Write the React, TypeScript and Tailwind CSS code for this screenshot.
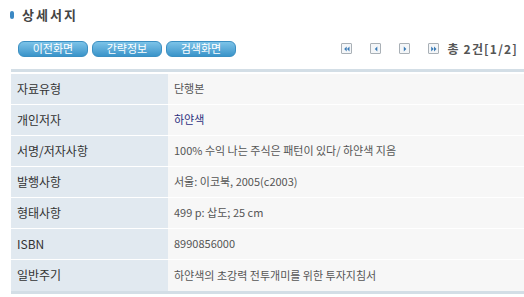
import { ReactNode } from "react";

const rows: { label: string; value: ReactNode }[] = [
  { label: "자료유형", value: "단행본" },
  { label: "개인저자", value: <span className="text-[#2b2f7e]">하얀색</span> },
  { label: "서명/저자사항", value: "100% 수익 나는 주식은 패턴이 있다/ 하얀색 지음" },
  { label: "발행사항", value: "서울: 이코북, 2005(c2003)" },
  { label: "형태사항", value: "499 p: 삽도; 25 cm" },
  { label: "ISBN", value: "8990856000" },
  { label: "일반주기", value: "하얀색의 초강력 전투개미를 위한 투자지침서" },
];

function NavIcon({ dir, double }: { dir: "l" | "r"; double?: boolean }) {
  const tri = (x: number) =>
    dir === "l" ? `M${x + 2.5} 1.5 L${x} 4 L${x + 2.5} 6.5 Z` : `M${x} 1.5 L${x + 2.5} 4 L${x} 6.5 Z`;
  return (
    <span className="flex size-[11px] items-center justify-center rounded-[1px] border border-[#a9b0b6] bg-[#f4f6f8]">
      <svg width="8" height="8" viewBox="0 0 8 8">
        {double ? (
          <>
            <path d={tri(1.2)} fill="#3a7bb6" />
            <path d={tri(4)} fill="#3a7bb6" />
          </>
        ) : (
          <path d={tri(2.8)} fill="#3a7bb6" />
        )}
      </svg>
    </span>
  );
}

function Btn({ children }: { children: ReactNode }) {
  return (
    <span className="flex h-[16px] w-[70px] items-center justify-center rounded-[6px] border border-[#3b8fc2] bg-gradient-to-b from-[#7cc3e8] to-[#3994c9] text-[11px] leading-none text-white">
      {children}
    </span>
  );
}

export default function App() {
  return (
    <div
      className="h-[297px] w-[524px] overflow-hidden bg-white"
      style={{ fontFamily: '"Noto Sans CJK KR", "Noto Sans", sans-serif' }}
    >
      <div className="flex items-center gap-[8px] pl-[10px] pt-[5px]">
        <span className="h-[8px] w-[4px] rounded-full bg-[#3b88c3]" />
        <span className="text-[13px] font-bold tracking-[2px] text-[#444]">상세서지</span>
      </div>

      <div className="mt-[15px] flex items-center pl-[18px] pr-[6px]">
        <div className="flex gap-[4px]">
          <Btn>이전화면</Btn>
          <Btn>간략정보</Btn>
          <Btn>검색화면</Btn>
        </div>
        <div className="ml-auto flex items-center">
          <div className="flex gap-[18px]">
            <NavIcon dir="l" double />
            <NavIcon dir="l" />
            <NavIcon dir="r" />
            <NavIcon dir="r" double />
          </div>
          <span className="ml-[8px] text-[12px] font-bold tracking-[1.2px] text-[#555]">총 2건[1/2]</span>
        </div>
      </div>

      <div className="ml-[11px] mt-[11px] border-t-[3px] border-b-[3px] border-[#d3dee6] pt-[2px]">
        {rows.map((r, i) => (
          <div
            key={r.label}
            className={`flex h-[31px] ${i < rows.length - 1 ? "border-b border-white" : ""}`}
          >
            <div className="flex w-[157px] items-center bg-[#e1e9f0] pl-[6px] text-[12px] text-[#333]">
              {r.label}
            </div>
            <div className="flex flex-1 items-center bg-[#f7f7f7] pl-[6px] text-[11px] text-[#555]">
              {r.value}
            </div>
          </div>
        ))}
      </div>
    </div>
  );
}
